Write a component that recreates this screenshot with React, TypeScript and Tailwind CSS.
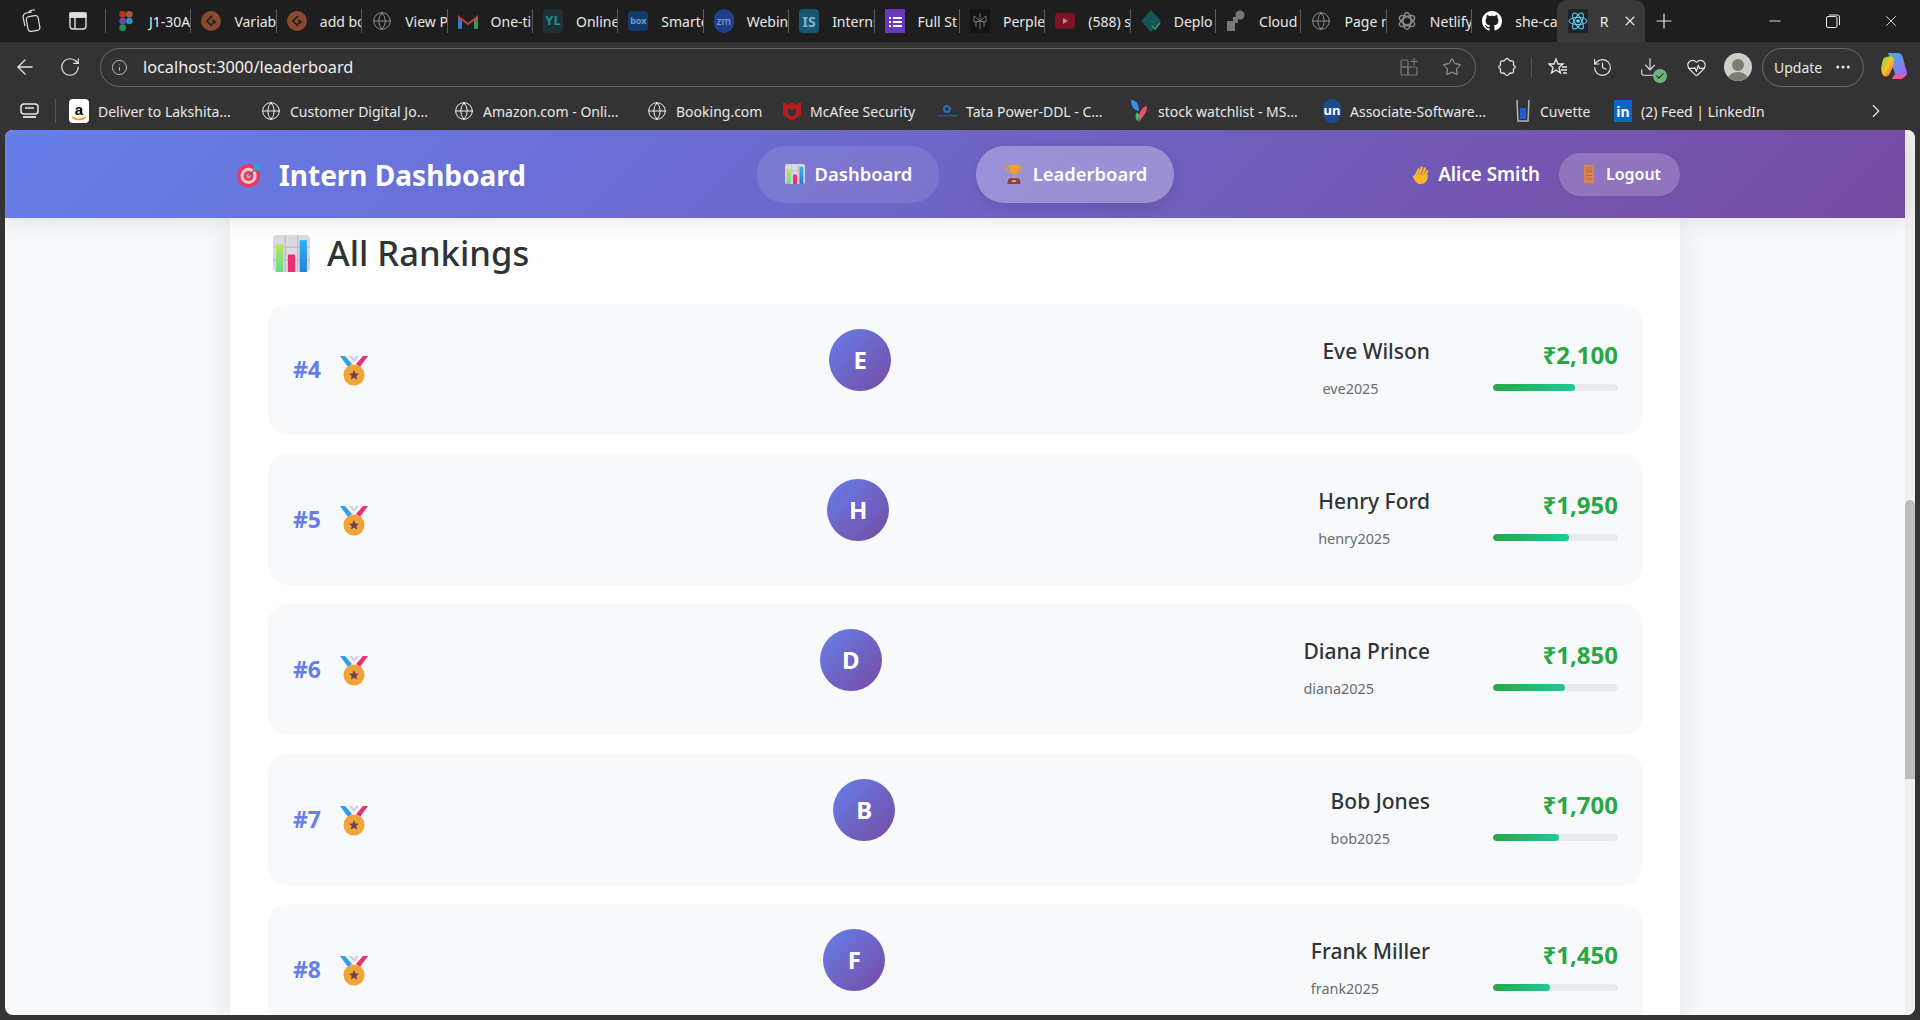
import { ArrowLeft, RotateCw, Info, Star, ChevronRight, X, Plus, Minus, Globe, History, Download, HeartPulse, MoreHorizontal, Check } from "lucide-react";

const tabs = [
  { icon: "figma", label: "J1-30A" },
  { icon: "vari", label: "Variabl" },
  { icon: "vari", label: "add bo" },
  { icon: "globe", label: "View P" },
  { icon: "gmail", label: "One-ti" },
  { icon: "yl", label: "Online" },
  { icon: "box", label: "Smarte" },
  { icon: "zm", label: "Webin" },
  { icon: "is", label: "Interns" },
  { icon: "forms", label: "Full St" },
  { icon: "perplexity", label: "Perple" },
  { icon: "yt", label: "(588) s" },
  { icon: "deploy", label: "Deplo" },
  { icon: "cloud", label: "Cloud" },
  { icon: "globe", label: "Page n" },
  { icon: "gpt", label: "Netlify" },
  { icon: "github", label: "she-ca" },
];

const bookmarks = [
  { icon: "amazon", label: "Deliver to Lakshita...", w: "w-[192px]" },
  { icon: "globeW", label: "Customer Digital Jo...", w: "w-[193px]" },
  { icon: "globeW", label: "Amazon.com - Onli...", w: "w-[193px]" },
  { icon: "globeW", label: "Booking.com", w: "w-[136px]" },
  { icon: "mcafee", label: "McAfee Security", w: "w-[154px]" },
  { icon: "tata", label: "Tata Power-DDL - C...", w: "w-[192px]" },
  { icon: "stock", label: "stock watchlist - MS...", w: "w-[194px]" },
  { icon: "un", label: "Associate-Software...", w: "w-[192px]" },
  { icon: "cuvette", label: "Cuvette", w: "w-[99px]" },
  { icon: "linkedin", label: "(2) Feed | LinkedIn", w: "w-[180px]" },
];

const interns = [
  { rank: 4, initial: "E", name: "Eve Wilson", user: "eve2025", amount: "₹2,100", pct: 65.6 },
  { rank: 5, initial: "H", name: "Henry Ford", user: "henry2025", amount: "₹1,950", pct: 60.9 },
  { rank: 6, initial: "D", name: "Diana Prince", user: "diana2025", amount: "₹1,850", pct: 57.8 },
  { rank: 7, initial: "B", name: "Bob Jones", user: "bob2025", amount: "₹1,700", pct: 53.1 },
  { rank: 8, initial: "F", name: "Frank Miller", user: "frank2025", amount: "₹1,450", pct: 45.3 },
];

function Favicon({ kind }: { kind: string }) {
  switch (kind) {
    case "figma":
      return (
        <svg viewBox="0 0 20 24" className="w-5 h-5 shrink-0">
          <circle cx="6" cy="4" r="4" fill="#b03a1e" />
          <circle cx="14" cy="4" r="4" fill="#b0563f" />
          <circle cx="6" cy="12" r="4" fill="#7a3fb0" />
          <circle cx="14" cy="12" r="4" fill="#2c8fb8" />
          <circle cx="6" cy="20" r="4" fill="#1d8f57" />
        </svg>
      );
    case "vari":
      return (
        <svg viewBox="0 0 20 20" className="w-5 h-5 shrink-0">
          <circle cx="10" cy="10" r="10" fill="#8a4a30" />
          <path d="M11 5 L6 10 L11 15 M11 9 L14 11 L11 13" fill="none" stroke="#1e1e1e" strokeWidth="1.6" />
        </svg>
      );
    case "globe":
      return <Globe size={20} strokeWidth={1.2} className="shrink-0 text-[#8c8c8c]" />;
    case "globeW":
      return <Globe size={20} strokeWidth={1.2} className="shrink-0 text-[#f0f0f0]" />;
    case "gmail":
      return (
        <svg viewBox="0 0 20 16" className="w-5 h-4 shrink-0">
          <path d="M0 3 L0 16 L4 16 L4 6 Z" fill="#3b78c9" />
          <path d="M20 3 L20 16 L16 16 L16 6 Z" fill="#2f9b57" />
          <path d="M0 2 L10 10 L20 2 L20 5 L10 12 L0 5 Z" fill="#c9403a" />
        </svg>
      );
    case "yl":
      return <span className="w-5 h-6 shrink-0 rounded-sm bg-[#1f2f33] text-[#1c8f95] text-[13px] font-bold flex items-center justify-center">YL</span>;
    case "box":
      return <span className="w-5 h-5 shrink-0 rounded-sm bg-[#123a6b] text-[#6b9ad1] text-[9px] font-bold flex items-center justify-center">box</span>;
    case "zm":
      return <span className="w-5 h-6 shrink-0 rounded-full bg-[#20408c] text-[#8fa6dc] text-[10px] flex items-center justify-center">zm</span>;
    case "is":
      return <span className="w-5 h-6 shrink-0 rounded-sm bg-[#17566e] text-[#7fb4c9] text-[14px] font-bold flex items-center justify-center">IS</span>;
    case "forms":
      return (
        <svg viewBox="0 0 20 24" className="w-5 h-6 shrink-0">
          <rect width="20" height="24" fill="#673ab7" />
          <path d="M4 8h2v2H4zM8 8h9v2H8zM4 12h2v2H4zM8 12h9v2H8zM4 16h2v2H4zM8 16h9v2H8z" fill="#fff" />
        </svg>
      );
    case "perplexity":
      return (
        <svg viewBox="0 0 20 24" className="w-5 h-6 shrink-0">
          <rect width="20" height="24" rx="2" fill="#141414" />
          <path d="M10 4v16M4 7l6 5 6-5M4 7v6l6-1 6 1V7M6 18v-5l4-1 4 1v5" fill="none" stroke="#777" strokeWidth="1" />
        </svg>
      );
    case "yt":
      return (
        <svg viewBox="0 0 20 16" className="w-5 h-4 shrink-0">
          <rect width="20" height="16" rx="4" fill="#7d1527" />
          <path d="M8 5l5 3-5 3z" fill="#b98a92" />
        </svg>
      );
    case "deploy":
      return (
        <svg viewBox="0 0 20 24" className="w-5 h-6 shrink-0">
          <path d="M10 1 L20 12 L10 23 L0 12 Z" fill="#14545a" />
          <path d="M11 17l3 3 5-6" fill="none" stroke="#2f9b57" strokeWidth="1.6" />
        </svg>
      );
    case "cloud":
      return (
        <svg viewBox="0 0 20 24" className="w-5 h-6 shrink-0">
          <rect x="1" y="12" width="8" height="10" fill="#777" />
          <rect x="7" y="8" width="5" height="6" fill="#777" />
          <circle cx="14" cy="6" r="4.5" fill="#777" />
        </svg>
      );
    case "gpt":
      return (
        <svg viewBox="0 0 20 20" className="w-5 h-5 shrink-0">
          <g fill="none" stroke="#8c8c8c" strokeWidth="1.4">
            <ellipse cx="10" cy="10" rx="4" ry="8.5" />
            <ellipse cx="10" cy="10" rx="4" ry="8.5" transform="rotate(60 10 10)" />
            <ellipse cx="10" cy="10" rx="4" ry="8.5" transform="rotate(120 10 10)" />
          </g>
        </svg>
      );
    case "github":
      return (
        <svg viewBox="0 0 16 16" className="w-5 h-5 shrink-0" fill="#fff">
          <path d="M8 0C3.58 0 0 3.58 0 8c0 3.54 2.29 6.53 5.47 7.59.4.07.55-.17.55-.38 0-.19-.01-.82-.01-1.49-2.01.37-2.53-.49-2.69-.94-.09-.23-.48-.94-.82-1.13-.28-.15-.68-.52-.01-.53.63-.01 1.08.58 1.23.82.72 1.21 1.87.87 2.33.66.07-.52.28-.87.51-1.07-1.78-.2-3.64-.89-3.64-3.95 0-.87.31-1.59.82-2.15-.08-.2-.36-1.02.08-2.12 0 0 .67-.21 2.2.82.64-.18 1.32-.27 2-.27s1.36.09 2 .27c1.53-1.04 2.2-.82 2.2-.82.44 1.1.16 1.92.08 2.12.51.56.82 1.27.82 2.15 0 3.07-1.87 3.75-3.65 3.95.29.25.54.73.54 1.48 0 1.07-.01 1.93-.01 2.2 0 .21.15.46.55.38A8.01 8.01 0 0 0 16 8c0-4.42-3.58-8-8-8z" />
        </svg>
      );
    case "react":
      return (
        <svg viewBox="0 0 20 24" className="w-5 h-6 shrink-0">
          <rect width="20" height="24" rx="2" fill="#20232a" />
          <g fill="none" stroke="#61dafb" strokeWidth="1">
            <ellipse cx="10" cy="12" rx="9" ry="3.6" />
            <ellipse cx="10" cy="12" rx="9" ry="3.6" transform="rotate(60 10 12)" />
            <ellipse cx="10" cy="12" rx="9" ry="3.6" transform="rotate(120 10 12)" />
          </g>
          <circle cx="10" cy="12" r="1.8" fill="#61dafb" />
        </svg>
      );
    case "amazon":
      return (
        <div className="w-5 h-6 shrink-0 rounded-sm bg-white flex flex-col items-center justify-center leading-none relative">
          <span className="text-[15px] font-bold text-black -mt-1 font-['Liberation_Sans',sans-serif]">a</span>
          <svg viewBox="0 0 16 5" className="w-4 absolute bottom-0.5">
            <path d="M1 1 Q8 6 15 1" fill="none" stroke="#f90" strokeWidth="1.6" />
          </svg>
        </div>
      );
    case "mcafee":
      return (
        <svg viewBox="0 0 18 22" className="w-[18px] h-[22px] shrink-0">
          <path d="M0 2l5 3 4-3 4 3 5-3v13l-9 6-9-6z" fill="#b81c22" />
          <path d="M5 8l4 2 4-2v6l-4 3-4-3z" fill="#333" />
        </svg>
      );
    case "tata":
      return (
        <svg viewBox="0 0 20 14" className="w-5 h-[14px] shrink-0">
          <circle cx="10" cy="5" r="3" fill="none" stroke="#2a6fc0" strokeWidth="2" />
          <rect y="11" width="20" height="1.4" fill="#1f5a9c" />
        </svg>
      );
    case "stock":
      return (
        <svg viewBox="0 0 20 24" className="w-5 h-6 shrink-0">
          <path d="M2 1 C8 1 10 6 10 12 C6 12 2 8 2 1Z" fill="#3a8ef0" />
          <path d="M18 7 C18 14 14 17 10 23 C8 17 12 8 18 7Z" fill="#ef4f6a" />
          <path d="M8 13 L11 17 L8 22 C6 19 6 16 8 13Z" fill="#39c26a" />
        </svg>
      );
    case "un":
      return <span className="w-[18px] h-6 shrink-0 rounded-full bg-[#1d4a8c] text-white text-[13px] font-bold flex items-center justify-center">un</span>;
    case "cuvette":
      return (
        <svg viewBox="0 0 16 24" className="w-4 h-6 shrink-0">
          <path d="M2 1 L3 22 L13 22 L14 1" fill="none" stroke="#a9b7c4" strokeWidth="1.5" />
          <rect x="5" y="9" width="6" height="11" fill="#1a5fd0" />
        </svg>
      );
    case "linkedin":
      return <span className="w-[18px] h-[22px] shrink-0 bg-[#0a66c2] text-white text-[14px] font-bold flex items-center justify-center">in</span>;
    default:
      return null;
  }
}

function TargetEmoji({ className }: { className: string }) {
  return (
    <svg viewBox="0 0 30 30" className={className}>
      <circle cx="14" cy="16" r="13" fill="#e8395f" />
      <circle cx="14" cy="16" r="9" fill="#f2c6d2" />
      <circle cx="14" cy="16" r="5.5" fill="#e8395f" />
      <circle cx="14" cy="16" r="2.5" fill="#b9aeb6" />
      <path d="M14 16 L24 6" stroke="#5b6a7a" strokeWidth="1.5" />
      <path d="M20 4 L24 1 L25 5 L29 6 L26 10 L21 10 Z" fill="#2f9fe8" />
    </svg>
  );
}

function ChartEmoji({ className, id }: { className: string; id: string }) {
  return (
    <svg viewBox="0 0 36 36" className={className}>
      <defs>
        <linearGradient id={`${id}g`} x1="0" y1="0" x2="0" y2="1">
          <stop offset="0" stopColor="#b6e85a" />
          <stop offset="1" stopColor="#5fdc8a" />
        </linearGradient>
        <linearGradient id={`${id}b`} x1="0" y1="0" x2="0" y2="1">
          <stop offset="0" stopColor="#2fb2f5" />
          <stop offset="1" stopColor="#2480d8" />
        </linearGradient>
      </defs>
      <rect width="36" height="36" rx="4" fill="#dcd8e2" />
      <path d="M12 0v36M24 0v36M0 12h36M0 24h36" stroke="#bdb8c6" strokeWidth="1" />
      <rect x="3" y="9" width="7" height="27" fill={`url(#${id}g)`} />
      <rect x="14.500" y="19" width="7" height="17" fill="#ee2f73" />
      <rect x="26" y="5" width="7" height="31" fill={`url(#${id}b)`} />
    </svg>
  );
}

function TrophyEmoji({ className }: { className: string }) {
  return (
    <svg viewBox="0 0 20 24" className={className}>
      <path d="M4 3 C0 3 0 9 6 10 M16 3 C20 3 20 9 14 10" fill="none" stroke="#e89a2c" strokeWidth="1.6" />
      <path d="M4 1 H16 C16 8 14 11 11 12 V16 H9 V12 C6 11 4 8 4 1Z" fill="#f0a030" />
      <path d="M3 19 Q3 17 5 17 H15 Q17 17 17 19 L18 24 H2 Z" fill="#8a3f4a" />
      <rect x="7.500" y="19.500" width="5" height="2" fill="#f5c04a" />
    </svg>
  );
}

function WaveEmoji({ className }: { className: string }) {
  return (
    <svg viewBox="0 0 22 24" className={className}>
      <path d="M1.500 11 Q0.500 14 3 16.500 M8 2.500 Q10 0.500 13 1.500" fill="none" stroke="#3568c8" strokeWidth="1.3" />
      <g fill="none" stroke="#f7b52b" strokeWidth="2.600" strokeLinecap="round">
        <path d="M7 14 L10 7" />
        <path d="M10.500 13 L13.500 5" />
        <path d="M14 13 L17 6" />
        <path d="M16.500 14 L19.500 9" />
      </g>
      <path d="M6 13 L19 13 L20 12 L20 16 Q18 23 12 23 Q8 23 6 19 L3.500 15 Q3.500 12.500 6 14Z" fill="#f7b52b" />
    </svg>
  );
}

function DoorEmoji({ className }: { className: string }) {
  return (
    <svg viewBox="0 0 12 20" className={className}>
      <rect width="10" height="18" x="1" y="1" fill="#d98650" />
      <rect x="2.500" y="2.500" width="7" height="6.500" fill="#c47a4c" />
      <path d="M2.500 11.500h7M2.500 15h7" stroke="#a9623a" strokeWidth="0.8" />
    </svg>
  );
}

function MedalEmoji() {
  return (
    <svg viewBox="0 0 28 30" className="w-[28px] h-[30px] shrink-0 mt-[3px]">
      <path d="M0 0 L5 0 L12 8 L8 11 Z" fill="#2f9fe8" />
      <path d="M28 0 L23 0 L16 8 L20 11 Z" fill="#ee2f73" />
      <path d="M9 0 L14 6 L19 0 L16 0 L14 3 L12 0Z" fill="#d5c8ef" />
      <circle cx="14" cy="19" r="10.500" fill="#f5a132" />
      <circle cx="14" cy="19" r="8.500" fill="#f0a53a" />
      <path d="M14 14 L15.500 17.500 L19 17.800 L16.300 20 L17.200 23.500 L14 21.700 L10.800 23.500 L11.700 20 L9 17.800 L12.500 17.500Z" fill="#6e3f56" />
    </svg>
  );
}

function InternRow({ rank, initial, name, user, amount, pct }: (typeof interns)[number]) {
  return (
    <div className="flex items-start bg-[#f8f9fa] rounded-[20px] h-[131px] shrink-0 p-[25px]">
      <div className="flex-1 flex items-start justify-between">
        <div className="w-[105px] flex items-center gap-[19px] h-[81px]">
          <span className="text-[23px] font-bold text-[#667eea] leading-none">#{rank}</span>
          <MedalEmoji />
        </div>
        <div className="w-[62px] h-[62px] rounded-full bg-[linear-gradient(135deg,#667eea,#764ba2)] text-white text-[24px] font-bold flex items-center justify-center">
          {initial}
        </div>
        <div className="flex flex-col pt-[8px]">
          <span className="text-[21px] leading-[28px] font-medium text-[#2d3436]">{name}</span>
          <span className="text-[14.400px] leading-[20px] mt-[14px] text-[#636e72]">{user}</span>
        </div>
      </div>
      <div className="ml-[63px] w-[125px] flex flex-col items-end">
        <span className="text-[24px] leading-[32px] font-bold text-[#28a745] mt-[10px]">{amount}</span>
        <div className="w-full h-[7px] rounded bg-[#e9ecef] mt-[13px] overflow-hidden">
          <div className="h-full rounded bg-[linear-gradient(90deg,#28a745,#20c997)]" style={{ width: `${pct}%` }} />
        </div>
      </div>
    </div>
  );
}

export default function App() {
  return (
    <div className="h-[1020px] w-[1920px] overflow-hidden bg-[#333333] flex flex-col font-['Noto_Sans','Open_Sans',sans-serif]">
      {/* Tab strip */}
      <div className="h-[42px] bg-[#1e1e1e] flex items-center shrink-0 text-[#e8e8e8] text-[14px]">
        <div className="w-[105px] flex items-center shrink-0 pl-[20px] gap-[27px]">
          <svg viewBox="0 0 22 24" className="w-[22px] h-[24px]" fill="none" stroke="#ddd" strokeWidth="1.2">
            <rect x="7" y="7" width="12" height="15" rx="3" transform="rotate(-10 13 14)" />
            <path d="M5 17 L3 8 Q3 5 6 4 L12 3 M8 4 Q9 2 12 1 L15 1" />
          </svg>
          <svg viewBox="0 0 18 18" className="w-[18px] h-[18px]" fill="none" stroke="#ddd" strokeWidth="1.4">
            <rect x="1" y="1" width="16" height="16" rx="3" />
            <path d="M1 5h16M6 5v12" />
            <rect x="1" y="1" width="16" height="4" fill="#ddd" />
          </svg>
        </div>
        {tabs.map((t) => (
          <div key={t.label} className="w-[85.400px] h-[24px] shrink-0 flex items-center gap-[13px] pl-[10px] border-l border-[#5c5c5c] overflow-hidden whitespace-nowrap">
            <Favicon kind={t.icon} />
            <span>{t.label}</span>
          </div>
        ))}
        <div className="w-[88px] h-[42px] shrink-0 self-end bg-[#3a3a3a] rounded-t-[10px] flex items-center pl-[11px] gap-[12px] whitespace-nowrap">
          <Favicon kind="react" />
          <span className="w-[9px] overflow-hidden">R</span>
          <X size={16} strokeWidth={1.6} className="ml-[1px]" />
        </div>
        <Plus size={24} strokeWidth={1.2} className="ml-[7px]" />
        <div className="ml-auto flex items-center gap-[42px] pr-[20px]">
          <Minus size={18} strokeWidth={1.2} />
          <svg viewBox="0 0 14 14" className="w-[14px] h-[14px]" fill="none" stroke="#e8e8e8" strokeWidth="1">
            <rect x="0.500" y="2.500" width="10.500" height="11" rx="1.500" />
            <path d="M3 1 H11.500 Q13.500 1 13.500 3 V11" />
          </svg>
          <X size={18} strokeWidth={1.2} />
        </div>
      </div>

      {/* Address bar */}
      <div className="h-[50px] flex items-center shrink-0 text-[#e8e8e8]">
        <ArrowLeft size={24} strokeWidth={1.3} className="ml-[13px]" />
        <RotateCw size={22} strokeWidth={1.3} className="ml-[22px]" />
        <div className="ml-[19px] w-[1376px] h-[39px] rounded-full border border-[#6a6a6a] bg-[#323232] flex items-center pl-[10px] pr-[10px]">
          <Info size={17} strokeWidth={1.2} className="text-[#d0d0d0]" />
          <span className="ml-[15px] text-[16.300px] text-[#f0f0f0]">localhost:3000/leaderboard</span>
          <svg viewBox="0 0 20 20" className="ml-auto w-[20px] h-[20px]" fill="none" stroke="#777" strokeWidth="1.2">
            <rect x="1" y="3" width="7" height="7" rx="1" />
            <rect x="1" y="10" width="7" height="8" rx="1" />
            <rect x="8" y="10" width="9" height="8" rx="1" />
            <path d="M14 1v7M10.500 4.500h7" />
          </svg>
          <Star size={20} strokeWidth={1.2} className="ml-[22px] mr-[3px] text-[#b0b0b0]" />
        </div>
        <svg viewBox="0 0 20 20" className="ml-[21px] w-[20px] h-[20px]" fill="none" stroke="#e8e8e8" strokeWidth="1.3">
          <path d="M8 3 Q10 0 12 3 Q12.500 4 14 4 Q17 3.500 16.500 6.500 Q16 8 17 8.500 Q19.500 10 17 11.500 Q16 12 16.500 13.500 Q17 16.500 14 16 Q12.500 16 12 17 Q10 20 8 17 Q7.500 16 6 16 Q3 16.500 3.500 13.500 Q4 12 3 11.500 Q0.500 10 3 8.500 Q4 8 3.500 6.500 Q3 3.500 6 4 Q7.500 4 8 3Z" />
        </svg>
        <div className="ml-[14px] w-px h-[20px] bg-[#555]" />
        <svg viewBox="0 0 20 20" className="ml-[16px] w-[20px] h-[20px]" fill="none" stroke="#e8e8e8" strokeWidth="1.3">
          <path d="M8 2 L10 7 L15 7 L11 10.500 L12.500 16 L8 13 L3.500 16 L5 10.500 L1 7 L6 7Z" />
          <path d="M14 10h5M13 13h6M15 16h4" />
        </svg>
        <History size={21} strokeWidth={1.3} className="ml-[24px]" />
        <div className="ml-[26px] relative">
          <Download size={22} strokeWidth={1.2} />
          <div className="absolute -right-[6px] -bottom-[5px] w-[14px] h-[14px] rounded-full bg-[#6ab47a] flex items-center justify-center">
            <Check size={10} strokeWidth={2.5} className="text-[#1e1e1e]" />
          </div>
        </div>
        <HeartPulse size={21} strokeWidth={1.3} className="ml-[25px]" />
        <div className="ml-[17px] w-[28px] h-[28px] rounded-full bg-[#cfcdc8] relative overflow-hidden">
          <div className="absolute top-[6px] left-[8px] w-[12px] h-[12px] rounded-full bg-[#7d7d78]" />
          <div className="absolute top-[19px] left-[3px] w-[22px] h-[20px] rounded-full bg-[#7d7d78]" />
        </div>
        <div className="ml-[10px] w-[102px] h-[39px] rounded-full border border-[#6a6a6a] flex items-center pl-[11px] gap-[12px] text-[14px]">
          Update
          <MoreHorizontal size={18} />
        </div>
        <svg viewBox="0 0 28 32" className="ml-[16px] w-[28px] h-[32px]">
          <defs>
            <linearGradient id="cp1" x1="0" y1="0" x2="1" y2="1">
              <stop offset="0" stopColor="#2fb8f0" />
              <stop offset="1" stopColor="#b45be8" />
            </linearGradient>
            <linearGradient id="cp2" x1="0" y1="0" x2="1" y2="1">
              <stop offset="0" stopColor="#7fd44f" />
              <stop offset="0.500" stopColor="#f5c02c" />
              <stop offset="1" stopColor="#ef5a3c" />
            </linearGradient>
          </defs>
          <path d="M8 2 H18 Q22 2 23 7 L27 22 Q27 26 22 26 H16 Z" fill="url(#cp1)" />
          <path d="M6 6 Q3 6 2 12 Q0 20 3 24 Q5 27 9 24 L14 14 Q15 8 12 5Z" fill="url(#cp2)" />
          <path d="M12 28 H21 Q25 27 25 24 H14 Z" fill="#ef5a8c" />
        </svg>
      </div>

      {/* Bookmarks bar */}
      <div className="h-[38px] flex items-center shrink-0 text-[#e8e8e8] text-[14px] whitespace-nowrap">
        <svg viewBox="0 0 20 18" className="ml-[20px] w-[20px] h-[18px]" fill="none" stroke="#e8e8e8" strokeWidth="1.5">
          <rect x="1" y="2" width="17" height="10" rx="3" />
          <path d="M5 6h9" />
          <path d="M3 15 H16" strokeWidth="1.8" />
        </svg>
        <div className="ml-[15px] w-px h-[24px] bg-[#555] mr-[13px]" />
        {bookmarks.map((b) => (
          <div key={b.label} className={`${b.w} shrink-0 flex items-center gap-[9px]`}>
            <Favicon kind={b.icon} />
            <span>{b.label}</span>
          </div>
        ))}
        <ChevronRight size={22} strokeWidth={1.3} className="ml-auto mr-[33px]" />
      </div>

      {/* Page */}
      <div className="mx-[5px] h-[885px] rounded-t-lg rounded-b-lg overflow-hidden bg-[#f8f9fa] flex shrink-0">
        <div className="flex-1 flex flex-col min-w-0">
          <header className="h-[88px] shrink-0 bg-[linear-gradient(135deg,#667eea_0%,#764ba2_100%)] shadow-[0_4px_20px_rgba(0,0,0,0.1)] relative z-10">
            <div className="w-[1450px] h-full mx-auto flex items-center text-white font-semibold">
              <div className="w-[296px] flex items-center gap-[16px] pl-[6px] pt-[1px]">
                <TargetEmoji className="w-[30px] h-[30px]" />
                <span className="text-[28px] font-bold whitespace-nowrap">Intern Dashboard</span>
              </div>
              <nav className="ml-[231px] flex items-center gap-[37px] text-[18.400px]">
                <div className="h-[57px] w-[182px] rounded-[28px] bg-white/10 flex items-center justify-center gap-[10px] pl-[1px]">
                  <ChartEmoji id="nav" className="w-[20px] h-[20px]" />
                  Dashboard
                </div>
                <div className="h-[57px] w-[198px] rounded-[28px] bg-white/30 shadow-[0_4px_15px_rgba(0,0,0,0.1)] flex items-center justify-center gap-[10px] pl-[2px]">
                  <TrophyEmoji className="w-[18px] h-[20px]" />
                  Leaderboard
                </div>
              </nav>
              <div className="ml-auto flex items-center">
                <WaveEmoji className="w-[21px] h-[22px]" />
                <span className="ml-[8px] text-[18.800px]">Alice Smith</span>
                <div className="ml-[19px] w-[121px] h-[43px] rounded-[22px] bg-white/20 flex items-center justify-center gap-[11px] pl-[5px] text-[16px]">
                  <DoorEmoji className="w-[12px] h-[20px]" />
                  Logout
                </div>
              </div>
            </div>
          </header>

          <main className="w-[1450px] mx-auto flex-1 min-h-0 bg-white shadow-[0_10px_30px_rgba(0,0,0,0.1)] pl-[38px] pr-[37px] overflow-hidden">
            <div className="flex items-center h-[70px] mb-[16px] pl-[5px] gap-[17px]">
              <ChartEmoji id="title" className="w-[37px] h-[37px]" />
              <h2 className="text-[34.600px] font-medium text-[#2d3436]">All Rankings</h2>
            </div>
            <div className="flex flex-col gap-[19px]">
              {interns.map((i) => (
                <InternRow key={i.rank} {...i} />
              ))}
            </div>
          </main>
        </div>
        <div className="w-[10px] shrink-0 bg-[#f0f0f0] pt-[370px]">
          <div className="h-[279px] rounded-t-[5px] bg-[#bdbdbd]" />
        </div>
      </div>
    </div>
  );
}
